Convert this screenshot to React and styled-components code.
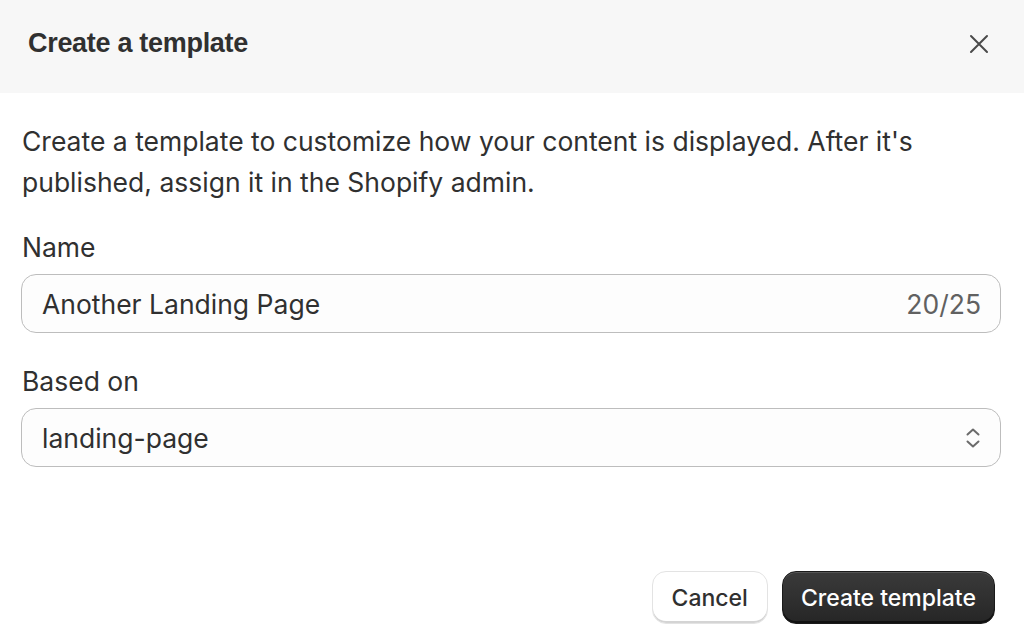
import React from 'react'
import styled, { createGlobalStyle } from 'styled-components'

const Global = createGlobalStyle`
  html, body { margin: 0; padding: 0; background: #ffffff; }
  body { font-family: Inter, "Noto Sans", sans-serif; color: #303030; }
  * { box-sizing: border-box; }
`

const Modal = styled.div`
  width: 1024px;
  height: 644px;
  display: flex;
  flex-direction: column;
  background: #ffffff;
  overflow: hidden;
`

const Header = styled.div`
  height: 93px;
  flex: none;
  display: flex;
  align-items: center;
  justify-content: space-between;
  padding: 0 33px 6px 28px;
  background: #f7f7f7;
`

const Title = styled.h2`
  margin: 0;
  font-family: "Liberation Sans", Arial, sans-serif;
  font-weight: 700;
  font-size: 27px;
  color: #303030;
  letter-spacing: -0.3px;
`

const CloseButton = styled.button`
  border: 0;
  background: none;
  padding: 0;
  width: 24px;
  height: 24px;
  display: flex;
  align-items: center;
  justify-content: center;
  cursor: pointer;
`

const Body = styled.div`
  flex: 1;
  display: flex;
  flex-direction: column;
  padding: 28px 22px 0 22px;
`

const Intro = styled.p`
  margin: 0 0 29px 0;
  font-size: 26.5px;
  line-height: 41px;
  color: #303030;
`

const Field = styled.div`
  display: flex;
  flex-direction: column;
  gap: 12px;
  margin-bottom: 33px;
`

const Label = styled.label`
  font-size: 26.5px;
  line-height: 30px;
  color: #303030;
`

const Box = styled.div`
  height: 59px;
  margin-left: -1px;
  margin-right: 1px;
  display: flex;
  align-items: center;
  justify-content: space-between;
  padding: 0 19px 0 20px;
  border: 1.5px solid #bdbdbd;
  border-radius: 15px;
  background: #fdfdfd;
  font-size: 26.5px;
  color: #303030;
`

const Counter = styled.span`
  color: #616161;
`

const Footer = styled.div`
  margin-top: auto;
  display: flex;
  justify-content: flex-end;
  gap: 14px;
  padding: 0 29px 20px 0;
`

const Button = styled.button`
  height: 53px;
  padding: 0 ${p => (p.$primary ? 18 : 19)}px;
  border-radius: 14px;
  font-family: Inter, "Noto Sans", sans-serif;
  font-size: 23px;
  font-weight: 500;
  cursor: pointer;
  color: ${p => (p.$primary ? '#ffffff' : '#303030')};
  background: ${p => (p.$primary ? 'linear-gradient(#3a3a3a, #262626)' : '#ffffff')};
  border: ${p => (p.$primary ? '1.5px solid #1a1a1a' : '1.5px solid #e3e3e3')};
  box-shadow: ${p =>
    p.$primary
      ? 'inset 0 -2px 0 #111, inset 0 1px 0 #555'
      : 'inset 0 -2px 0 #d4d4d4'};
`

const Chevrons = () => (
  <svg width="16" height="24" viewBox="0 0 16 24" fill="none" stroke="#6b6b6b" strokeWidth="2" strokeLinecap="round" strokeLinejoin="round">
    <path d="M2.5 8.5l5.5-5 5.5 5" />
    <path d="M2.5 15.5l5.5 5 5.5-5" />
  </svg>
)

const CloseIcon = () => (
  <svg width="20" height="20" viewBox="0 0 20 20" fill="none" stroke="#4a4a4a" strokeWidth="2" strokeLinecap="round">
    <path d="M2 2l16 16M18 2L2 18" />
  </svg>
)

export default function App() {
  return (
    <>
      <Global />
      <Modal>
        <Header>
          <Title>Create a template</Title>
          <CloseButton aria-label="Close"><CloseIcon /></CloseButton>
        </Header>
        <Body>
          <Intro>
            Create a template to customize how your content is displayed. After it's published, assign it in the Shopify admin.
          </Intro>
          <Field>
            <Label>Name</Label>
            <Box>
              <span>Another Landing Page</span>
              <Counter>20/25</Counter>
            </Box>
          </Field>
          <Field>
            <Label>Based on</Label>
            <Box>
              <span>landing-page</span>
              <Chevrons />
            </Box>
          </Field>
        </Body>
        <Footer>
          <Button>Cancel</Button>
          <Button $primary>Create template</Button>
        </Footer>
      </Modal>
    </>
  )
}
